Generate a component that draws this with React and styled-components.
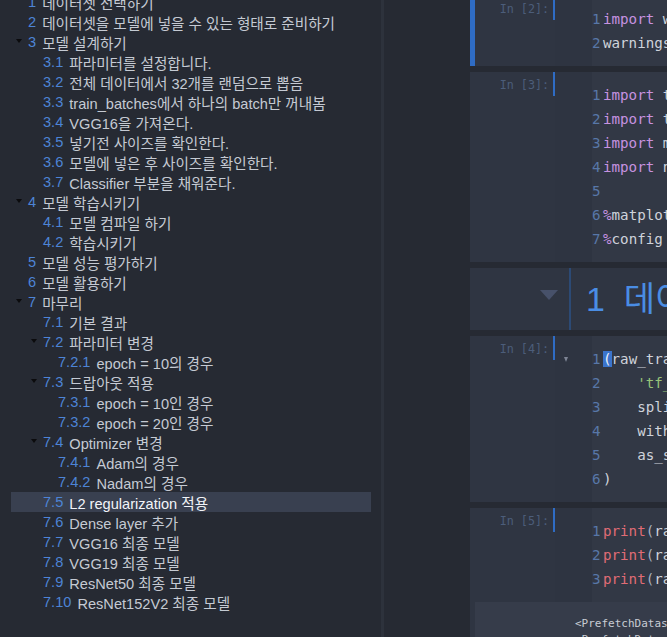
import React from 'react';
import styled, { createGlobalStyle } from 'styled-components';

const GlobalStyle = createGlobalStyle`
  html, body {
    margin: 0;
    padding: 0;
    background: #262a33;
    overflow: hidden;
  }
`;

const Page = styled.div`
  display: flex;
  height: 637px;
  overflow: hidden;
  font-family: "Liberation Sans", "Noto Sans CJK KR", sans-serif;
`;

// ---- table of contents ----

const Toc = styled.nav`
  width: 381px;
  flex-shrink: 0;
  box-sizing: border-box;
  padding: 0 10px 0 11px;
  background: #262a33;
`;

const TocList = styled.ul`
  list-style: none;
  margin: -8px 0 0;
  padding: 0;
`;

const TocRow = styled.li`
  display: flex;
  align-items: center;
  height: 20px;
  padding-left: ${p => 5 + (p.$level - 1) * 15}px;
  background: ${p => (p.$active ? '#394050' : 'transparent')};
  color: ${p => (p.$active ? '#f2f4f8' : '#c5cad3')};
  font-size: 14.6px;
  white-space: nowrap;
`;

const Toggle = styled.span`
  width: 12px;
  flex-shrink: 0;
  display: flex;
  align-items: center;
  height: 100%;
  margin-top: -3px;

  &::before {
    content: '';
    display: ${p => (p.$open ? 'block' : 'none')};
    border-left: 3.5px solid transparent;
    border-right: 3.5px solid transparent;
    border-top: 4px solid #0b0b0d;
  }
`;

const Num = styled.span`
  color: #4d84d6;
  margin-right: 6px;
`;

const Splitter = styled.div`
  width: 3px;
  flex-shrink: 0;
  background: #2d323c;
`;

// ---- notebook ----

const Notebook = styled.main`
  flex: 1;
  overflow: hidden;
  padding-left: 86px;
`;

const CellStack = styled.div`
  width: 900px;
  margin-top: -4px;
  display: flex;
  flex-direction: column;
  gap: 6px;
`;

const Cell = styled.div`
  display: flex;
  flex-direction: column;
  background: #2f3542;
  border-left: 5px solid ${p => (p.$selected ? '#2f6cc4' : 'transparent')};
`;

const InputRow = styled.div`
  display: flex;
`;

const Prompt = styled.div`
  width: 78px;
  box-sizing: border-box;
  padding: 1px 4px 0 0;
  text-align: right;
  font-family: "DejaVu Sans Mono", monospace;
  font-size: 11.7px;
  line-height: 24px;
  color: #4c5d7a;
`;

const Marker = styled.div`
  width: 2px;
  height: 24px;
  background: #2f6cc4;
`;

const Gutter = styled.div`
  width: 37px;
  background: #2e3441;
  box-sizing: border-box;
  padding-top: 11px;
`;

const FoldSlot = styled.div`
  height: 24px;
  display: flex;
  align-items: center;
  padding-left: 9px;

  &::before {
    content: '';
    display: ${p => (p.$fold ? 'block' : 'none')};
    border-left: 2.5px solid transparent;
    border-right: 2.5px solid transparent;
    border-top: 5px solid #7d8494;
  }
`;

const Editor = styled.div`
  flex: 1;
  background: #323845;
  padding: 11px 0;
  font-family: "DejaVu Sans Mono", monospace;
  font-size: 14.2px;
  line-height: 24px;
  color: #cfd3db;
`;

const Line = styled.div`
  display: flex;
  white-space: pre;
`;

const LineNo = styled.span`
  width: 11px;
  flex-shrink: 0;
  color: #5877a8;
`;

const Tok = styled.span`
  color: ${p => ({ kw: '#c792e0', fn: '#e06c75', str: '#98c379', punc: '#a9b0bd' }[p.$t] || '#cfd3db')};
`;

const Bracket = styled.span`
  background: #3b74cc;
  color: #eef2f8;
`;

const MdCell = styled.div`
  display: flex;
  height: 62px;
  background: #2f3542;
`;

const Collapser = styled.div`
  width: 99px;
  flex-shrink: 0;
  display: flex;
  align-items: center;
  justify-content: flex-end;
  padding-right: 11px;
  box-sizing: border-box;

  &::before {
    content: '';
    margin-top: -8px;
    border-left: 9px solid transparent;
    border-right: 9px solid transparent;
    border-top: 10px solid #47516a;
  }
`;

const RenderBar = styled.div`
  width: 2px;
  background: #2c4a75;
`;

const Heading = styled.h1`
  margin: 0;
  padding-left: 15px;
  font-size: 34px;
  font-weight: normal;
  line-height: 62px;
  color: #4a8de4;
  white-space: nowrap;
`;

const Output = styled.div`
  background: #363c4a;
  padding: 14px 0 0 100px;
  font-family: "DejaVu Sans Mono", monospace;
  font-size: 11px;
  line-height: 16px;
  color: #c8ccd4;
  white-space: pre;
`;

const toc = [
  [1, '1', '데이터셋 선택하기'],
  [1, '2', '데이터셋을 모델에 넣을 수 있는 형태로 준비하기'],
  [1, '3', '모델 설계하기', true],
  [2, '3.1', '파라미터를 설정합니다.'],
  [2, '3.2', '전체 데이터에서 32개를 랜덤으로 뽑음'],
  [2, '3.3', 'train_batches에서 하나의 batch만 꺼내봄'],
  [2, '3.4', 'VGG16을 가져온다.'],
  [2, '3.5', '넣기전 사이즈를 확인한다.'],
  [2, '3.6', '모델에 넣은 후 사이즈를 확인한다.'],
  [2, '3.7', 'Classifier 부분을 채워준다.'],
  [1, '4', '모델 학습시키기', true],
  [2, '4.1', '모델 컴파일 하기'],
  [2, '4.2', '학습시키기'],
  [1, '5', '모델 성능 평가하기'],
  [1, '6', '모델 활용하기'],
  [1, '7', '마무리', true],
  [2, '7.1', '기본 결과'],
  [2, '7.2', '파라미터 변경', true],
  [3, '7.2.1', 'epoch = 10의 경우'],
  [2, '7.3', '드랍아웃 적용', true],
  [3, '7.3.1', 'epoch = 10인 경우'],
  [3, '7.3.2', 'epoch = 20인 경우'],
  [2, '7.4', 'Optimizer 변경', true],
  [3, '7.4.1', 'Adam의 경우'],
  [3, '7.4.2', 'Nadam의 경우'],
  [2, '7.5', 'L2 regularization 적용', false, true],
  [2, '7.6', 'Dense layer 추가'],
  [2, '7.7', 'VGG16 최종 모델'],
  [2, '7.8', 'VGG19 최종 모델'],
  [2, '7.9', 'ResNet50 최종 모델'],
  [2, '7.10', 'ResNet152V2 최종 모델'],
];

const CodeCell = ({ n, selected, lines, fold, children }) => (
  <Cell $selected={selected}>
    <InputRow>
      <Prompt>In [{n}]:</Prompt>
      <Marker />
      <Gutter>
        {lines.map((_, i) => <FoldSlot key={i} $fold={fold === i} />)}
      </Gutter>
      <Editor>
        {lines.map((l, i) => (
          <Line key={i}>
            <LineNo>{i + 1}</LineNo>
            <span>{l}</span>
          </Line>
        ))}
      </Editor>
    </InputRow>
    {children}
  </Cell>
);

const kw = t => <Tok $t="kw">{t}</Tok>;

export default function App() {
  return (
    <>
      <GlobalStyle />
      <Page>
        <Toc>
          <TocList>
            {toc.map(([level, num, text, open, active]) => (
              <TocRow key={num} $level={level} $active={active}>
                <Toggle $open={open} />
                <Num>{num}</Num>
                {text}
              </TocRow>
            ))}
          </TocList>
        </Toc>
        <Splitter />
        <Notebook>
          <CellStack>
            <CodeCell
              n={2}
              selected
              lines={[
                <>{kw('import')} warnings</>,
                <>warnings.filterwarnings(<Tok $t="str">'ignore'</Tok>)</>,
              ]}
            />
            <CodeCell
              n={3}
              lines={[
                <>{kw('import')} tensorflow {kw('as')} tf</>,
                <>{kw('import')} tensorflow_datasets {kw('as')} tfds</>,
                <>{kw('import')} matplotlib.pyplot {kw('as')} plt</>,
                <>{kw('import')} numpy {kw('as')} np</>,
                '',
                <>{kw('%')}matplotlib inline</>,
                <>{kw('%')}config InlineBackend.figure_format = <Tok $t="str">'retina'</Tok></>,
              ]}
            />
            <MdCell>
              <Collapser />
              <RenderBar />
              <Heading>1&nbsp;&nbsp;데이터셋 선택하기</Heading>
            </MdCell>
            <CodeCell
              n={4}
              fold={0}
              lines={[
                <><Bracket>(</Bracket>raw_train, raw_validation, raw_test), metadata = tfds.load(</>,
                <>    <Tok $t="str">'tf_flowers'</Tok>,</>,
                <>    split=[<Tok $t="str">'train[:80%]'</Tok>, <Tok $t="str">'train[80%:90%]'</Tok>],</>,
                <>    with_info=<Tok $t="kw">True</Tok>,</>,
                <>    as_supervised=<Tok $t="kw">True</Tok>,</>,
                ')',
              ]}
            />
            <CodeCell
              n={5}
              lines={[
                <><Tok $t="fn">print</Tok><Tok $t="punc">(</Tok>raw_train)</>,
                <><Tok $t="fn">print</Tok><Tok $t="punc">(</Tok>raw_validation)</>,
                <><Tok $t="fn">print</Tok><Tok $t="punc">(</Tok>raw_test)</>,
              ]}
            >
              <Output>
                {'<PrefetchDataset shapes: ((None, None, 3), ()), types: (tf.uint8, tf.int64)>\n' +
                  '<PrefetchDataset shapes: ((None, None, 3), ()), types: (tf.uint8, tf.int64)>\n' +
                  '<PrefetchDataset shapes: ((None, None, 3), ()), types: (tf.uint8, tf.int64)>'}
              </Output>
            </CodeCell>
          </CellStack>
        </Notebook>
      </Page>
    </>
  );
}
